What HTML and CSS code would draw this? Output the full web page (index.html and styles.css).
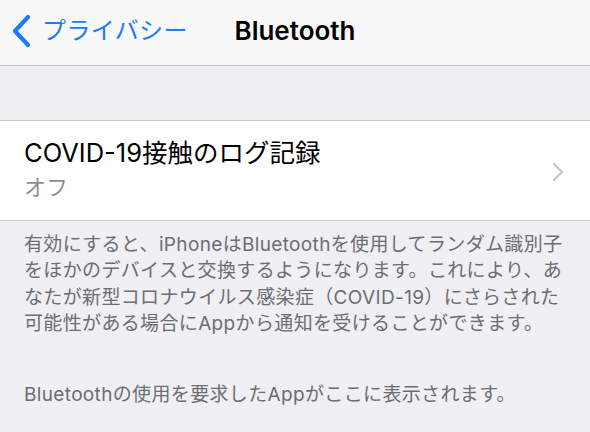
FILE: index.html
```html
<!DOCTYPE html>
<html lang="ja">
<head>
<meta charset="utf-8">
<link rel="stylesheet" href="styles.css">
</head>
<body>
<header class="navbar">
  <a class="back">
    <svg class="back-chevron" viewBox="0 0 22 34" width="22" height="34">
      <path d="M17 3 L4 17 L17 31" fill="none" stroke="currentColor" stroke-width="4.2" stroke-linecap="round" stroke-linejoin="round"/>
    </svg>
    <span class="back-label">プライバシー</span>
  </a>
  <h1 class="title">Bluetooth</h1>
</header>
<main class="content">
  <section class="group">
    <div class="cell">
      <div class="cell-text">
        <div class="cell-title">COVID-19接触のログ記録</div>
        <div class="cell-subtitle">オフ</div>
      </div>
      <svg class="disclosure" viewBox="0 0 12 20" width="12" height="20">
        <path d="M2 2 L10 10 L2 18" fill="none" stroke="currentColor" stroke-width="2.4" stroke-linecap="round" stroke-linejoin="round"/>
      </svg>
    </div>
  </section>
  <p class="footer">有効にすると、iPhoneはBluetoothを使用してランダム識別子<br>をほかのデバイスと交換するようになります。これにより、あ<br>なたが新型コロナウイルス感染症（COVID-19）にさらされた<br>可能性がある場合にAppから通知を受けることができます。</p>
  <p class="note">Bluetoothの使用を要求したAppがここに表示されます。</p>
</main>
</body>
</html>
```

FILE: styles.css
```css
html, body {
  margin: 0;
  padding: 0;
}

body {
  width: 590px;
  height: 432px;
  overflow: hidden;
  background: #efeff4;
  font-family: "Inter", "Noto Sans CJK JP", sans-serif;
  color: #000;
}

.navbar {
  position: relative;
  height: 65px;
  background: #f8f8f8;
  border-bottom: 1px solid #c4c4c7;
  display: flex;
  align-items: center;
  justify-content: center;
}

.back {
  position: absolute;
  left: 11px;
  top: 14px;
  display: flex;
  align-items: center;
  color: #1b7cf3;
}

.back-chevron {
  display: block;
}

.back-label {
  margin-left: 9px;
  font-size: 24px;
  line-height: 34px;
  letter-spacing: 0.4px;
}

.title {
  margin: 0;
  font-size: 26px;
  font-weight: 600;
  line-height: 34px;
  margin-top: -4px;
}

.content {
  padding-top: 54px;
}

.group {
  background: #fff;
  border-top: 1px solid #c9c9cc;
  border-bottom: 1px solid #c9c9cc;
}

.cell {
  height: 99px;
  display: flex;
  align-items: center;
  padding: 0 26px 0 24px;
}

.cell-text {
  flex: 1;
  margin-top: -4px;
}

.cell-title {
  font-size: 25.5px;
  line-height: 34px;
}

.cell-subtitle {
  margin-top: 2px;
  font-size: 22px;
  line-height: 30px;
  color: #8e8e93;
}

.disclosure {
  color: #c7c7cc;
  display: block;
  margin-top: 2px;
}

.footer {
  margin: 0;
  padding: 11px 8px 0 24px;
  font-size: 19px;
  line-height: 26.3px;
  letter-spacing: 0.35px;
  color: #6d6d72;
  white-space: nowrap;
}

.note {
  margin: 0;
  padding: 45px 8px 0 24px;
  font-size: 19px;
  line-height: 26px;
  letter-spacing: 0.35px;
  color: #6d6d72;
}
```
